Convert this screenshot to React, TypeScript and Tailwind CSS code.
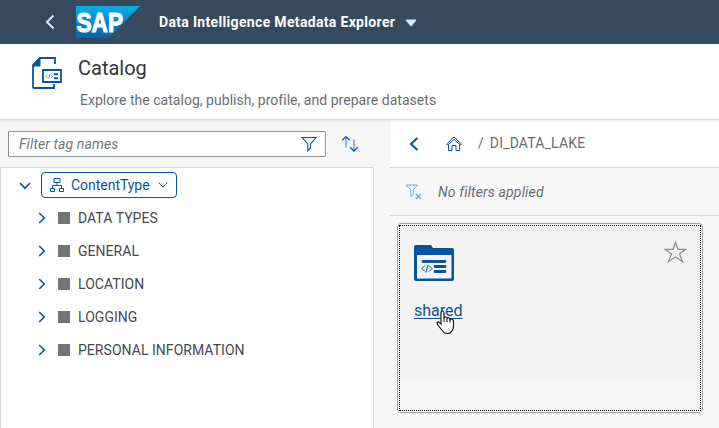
import React from 'react';

const tags = ['DATA TYPES', 'GENERAL', 'LOCATION', 'LOGGING', 'PERSONAL INFORMATION'];

function SapLogo() {
  return (
    <svg width="65" height="32" viewBox="0 0 65 32" className="ml-[19px] shrink-0">
      <defs>
        <linearGradient id="sap" x1="0" y1="0" x2="0" y2="1">
          <stop offset="0" stopColor="#08b0e4" />
          <stop offset="0.5" stopColor="#0787cb" />
          <stop offset="1" stopColor="#0562ac" />
        </linearGradient>
      </defs>
      <path d="M0 0H64L33 32H0Z" fill="url(#sap)" />
      <text x="0.5" y="25.7" textLength="46.5" lengthAdjust="spacingAndGlyphs" fill="#fff" stroke="#fff" strokeWidth="1.1" className="font-['Liberation_Sans',sans-serif] text-[27px] font-bold">SAP</text>
      <circle cx="42" cy="30" r="1.6" fill="none" stroke="#37628c" />
    </svg>
  );
}

function Header() {
  return (
    <header className="flex h-11 shrink-0 items-center bg-[#354a5f] text-white">
      <svg width="10" height="16" viewBox="0 0 10 16" className="ml-[45px]" fill="none" stroke="#d1e8ff" strokeWidth="2"><path d="M8.5 1.5L2 8L8.5 14.5" /></svg>
      <div className="-mt-px ml-[2px] flex"><SapLogo /></div>
      <h1 className="ml-[18px] w-[239px] text-sm font-bold whitespace-nowrap tracking-[0.33px]">Data Intelligence Metadata Explorer</h1>
      <svg width="12" height="8" viewBox="0 0 12 8" className="ml-[7px] mt-[2px]" fill="#d1e8ff"><path d="M1 0.5H11Q11.5 1 11 1.7L6.7 7Q6 7.7 5.3 7L1 1.7Q.5 1 1 .5Z" /></svg>
    </header>
  );
}

function Funnel({ className }: { className: string }) {
  return (
    <svg width="16" height="16" viewBox="0 0 16 16" className={className} fill="none" stroke="currentColor" strokeWidth="1.1">
      <path d="M1 1.5H15L9.5 8V12L6.8 14.6V8L1 1.5Z" />
    </svg>
  );
}

function TagTree() {
  return (
    <aside className="flex w-[374px] flex-col">
      <div className="flex h-[47px] items-start pt-[11px] pl-2">
        <div className="flex h-[26px] w-[318px] items-center rounded-[1px] border border-[#89919a] bg-white pl-[10px]">
          <span className="grow text-sm text-[#74777a] italic tracking-[0.1px]">Filter tag names</span>
          <Funnel className="mr-[8px] text-[#0854a0]" />
        </div>
        <svg width="18" height="18" viewBox="0 0 18 18" className="mt-[4px] ml-[15px]" fill="none" stroke="#0854a0" strokeWidth="1.3">
          <path d="M5 2V12.5M13 4.5V15.5" strokeWidth="1.8" stroke="#82a8d0" />
          <path d="M1.2 5.3L5 1.6L8.8 5.3M9.2 12.3L13 16L16.8 12.3" />
        </svg>
      </div>
      <div className="grow border-t border-r border-l border-[#d9d9d9] bg-white pt-1">
        <div className="flex h-[26px] items-center pl-[18px]">
          <svg width="12" height="8" viewBox="0 0 12 8" fill="none" stroke="#0854a0" strokeWidth="1.7" className="mt-[2px]"><path d="M1 1L6 6.3L11 1" /></svg>
          <button className="ml-[10px] flex h-[26px] w-[136px] items-center rounded-[4px] border border-[#0854a0] pl-2 text-[#0854a0]">
            <svg width="14" height="14" viewBox="0 0 14 14" fill="none" stroke="currentColor"><path d="M4 .5H10V4.5H4ZM.5 10.5H4.5V13.5H.5ZM9.5 10.5H13.5V13.5H9.5ZM7 4.5V7.5M2.5 10V7.5H11.5V10" /></svg>
            <span className="ml-[7px] w-[80px] text-left text-sm tracking-[-0.03px]">ContentType</span>
            <svg width="10" height="6" viewBox="0 0 10 6" fill="none" stroke="currentColor" className="ml-[7px]"><path d="M.5 .5L5 5L9.5 .5" /></svg>
          </button>
        </div>
        <ul className="mt-[3px]">
          {tags.map((name) => (
            <li key={name} className="flex h-[33px] items-center pl-[37px]">
              <svg width="8" height="12" viewBox="0 0 8 12" fill="none" stroke="#0854a0" strokeWidth="1.6" className="mt-px"><path d="M1.2 1L6.3 6L1.2 11" /></svg>
              <span className="ml-3 size-3 bg-[#737373]" />
              <span className="ml-2 text-sm tracking-[0.04px] text-[#45494d]">{name}</span>
            </li>
          ))}
        </ul>
      </div>
    </aside>
  );
}

function FolderCard() {
  return (
    <article className="mt-[7px] ml-[7px] h-[190px] w-[306px] rounded-[4px] border border-[#a0a0a0] p-px">
      <div className="relative h-full border border-dotted border-black bg-[linear-gradient(#f4f4f4_153px,#f7f7f7_153px)] pt-[19px] pl-[14px]">
        <div className="flex items-start justify-between">
          <svg width="40" height="36" viewBox="0 0 40 36">
            <path fill="#0854a0" fillRule="evenodd" d="M2 0H17L19 3H38Q40 3 40 5V34Q40 36 38 36H2Q0 36 0 34V2Q0 0 2 0ZM3 10V33.5H37.5V10Z" />
            <path d="M9 16.5H31M21 21.5H31M21 26.5H31" stroke="#0854a0" strokeWidth="2.8" strokeLinecap="round" />
            <path d="M11 20.5L8 23.5L11 26.5M14.2 19.8L11.8 27.5M15 20.5L18 23.5L15 26.5" fill="none" stroke="#0854a0" />
          </svg>
          <svg width="23" height="22" viewBox="0 0 23 22" className="-mt-[4px] mr-[13px]" fill="none" stroke="#89919a" strokeWidth="1.3">
            <path d="M11.5 1.5L14 8.3H21.7L15.5 12.9L18.7 20.7L11.5 16L4.3 20.7L7.5 12.9L1.3 8.3H9Z" />
          </svg>
        </div>
        <a className="mt-[18px] block w-12 text-[16px] leading-6 text-[#0854a0] underline underline-offset-2">shared</a>
        <svg width="19" height="25" viewBox="0 0 19 25" className="absolute top-[84px] left-[36px]">
          <path d="M5 14V3Q5 1 6.5 1Q8 1 8 3V8Q8.3 6.8 9.5 7Q11 7 11 8.5Q11.5 7.5 12.7 7.8Q14 8 14 9.5Q14.8 8.7 16 9.2Q17.5 9.6 17.5 11.5V16.5Q17.5 19 16 20.8Q14.5 23.6 11.5 23.6Q8.3 23.6 7 21.5L1.5 14.5Q.5 12.8 1.6 12.1Q3 11.3 5 14Z" fill="#fff" stroke="#171a24" strokeWidth="1.2" />
          <path d="M8 7.5V12M11 8.5V12M14 9.5V12.5" stroke="#171a24" strokeWidth="1.1" />
        </svg>
      </div>
    </article>
  );
}

function Browser() {
  return (
    <main className="ml-4 flex grow flex-col">
      <nav className="flex h-12 items-center border-b border-[#d9d9d9] bg-white pl-[19px]">
        <svg width="10" height="14" viewBox="0 0 10 14" fill="none" stroke="#0854a0" strokeWidth="2.1" className="mt-px"><path d="M8.5 1L2 7L8.5 13" /></svg>
        <svg width="16" height="15" viewBox="0 0 16 15" fill="none" stroke="#0854a0" strokeWidth="1" className="ml-[27px]"><path d="M.6 8L8 1L15.4 8L14.5 9L8 3.5L1.5 9ZM2.5 8.5V14.5H6V9.5H10V14.5H13.5V8.5" /></svg>
        <span className="-mt-px ml-4 text-sm text-[#6a6d70]">/</span>
        <span className="-mt-px ml-[6px] text-sm tracking-[0.18px] text-[#6a6d70]">DI_DATA_LAKE</span>
      </nav>
      <div className="flex h-12 shrink-0 items-center border-b border-[#d9d9d9] pl-[15px]">
        <svg width="17" height="16" viewBox="0 0 17 16" fill="none" stroke="#84aacf"><path d="M1 1H12.5L8.2 6V10L5.8 12.8V6L1 1Z" /><path d="M11 10L16 15M16 10L11 15" strokeWidth="1.5" /></svg>
        <span className="ml-[16px] text-sm tracking-[0.15px] text-[#6a6d70] italic">No filters applied</span>
      </div>
      <FolderCard />
    </main>
  );
}

export default function App() {
  return (
    <div className="flex h-[428px] w-[719px] flex-col overflow-hidden bg-[#f7f7f7] font-['Roboto',sans-serif]">
      <Header />
      <section className="z-10 flex h-[76px] shrink-0 border-b border-[#d9d9d9] bg-white shadow-[0_1px_3px_rgba(0,0,0,0.1)]">
        <svg width="31" height="33" viewBox="0 0 31 33" className="mt-[13px] ml-[31px]" fill="none" stroke="#0854a0" strokeWidth="1.8">
          <path d="M24 7V1H9L2 8V30Q2 31 3 31H23V27" />
          <path d="M9 1V9H2Z" fill="#0854a0" strokeWidth="1" />
          <path d="M12 13H30V25H12Z" />
          <path d="M23 17.3H27M23 21.3H27" strokeWidth="2" />
          <path d="M16.5 17.7L14.8 19.3L16.5 21M18.7 17L17.8 21.5M19.8 17.7L21.5 19.3L19.8 21" strokeWidth=".6" />
        </svg>
        <div className="ml-4 whitespace-nowrap">
          <h2 className="mt-[10px] text-[20px] leading-[28px] text-[#32363a]">Catalog</h2>
          <p className="mt-[8px] ml-[2px] text-sm leading-5 tracking-[0.03px] text-[#6a6d70]">Explore the catalog, publish, profile, and prepare datasets</p>
        </div>
      </section>
      <div className="flex grow">
        <TagTree />
        <Browser />
      </div>
    </div>
  );
}
